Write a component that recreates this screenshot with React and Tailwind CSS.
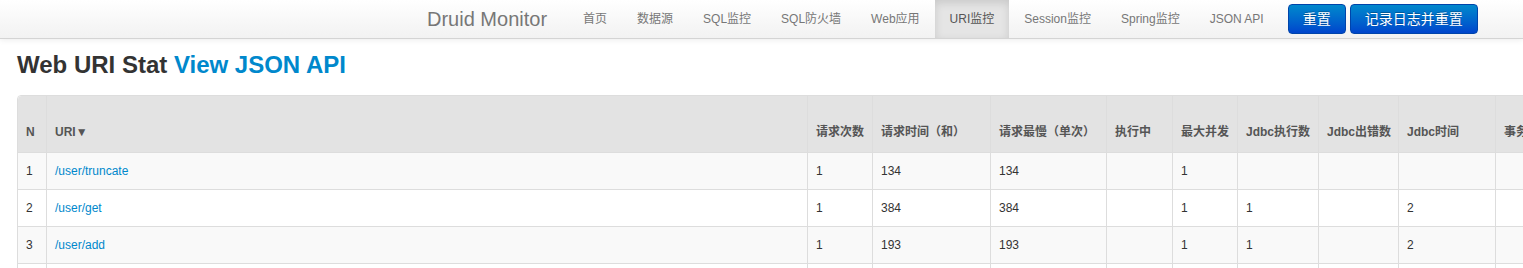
import React from "react";

const navItems = ["首页", "数据源", "SQL监控", "SQL防火墙", "Web应用", "URI监控", "Session监控", "Spring监控", "JSON API"];

const cols = [
  { label: "N", w: 28 },
  { label: "URI▼", w: 761 },
  { label: "请求次数", w: 65 },
  { label: "请求时间（和）", w: 118 },
  { label: "请求最慢（单次）", w: 116 },
  { label: "执行中", w: 66 },
  { label: "最大并发", w: 65 },
  { label: "Jdbc执行数", w: 81 },
  { label: "Jdbc出错数", w: 80 },
  { label: "Jdbc时间", w: 97 },
  { label: "事务提交数", w: 90 },
  { label: "事务回滚数", w: 90 },
  { label: "读取行数", w: 80 },
];

const rows = [
  ["1", "/user/truncate", "1", "134", "134", "", "1", "", "", "", "", "", ""],
  ["2", "/user/get", "1", "384", "384", "", "1", "1", "", "2", "", "", ""],
  ["3", "/user/add", "1", "193", "193", "", "1", "1", "", "2", "", "", ""],
  ["4", "/user/list", "1", "52", "52", "", "1", "1", "", "1", "", "", ""],
];

const tableWidth = cols.reduce((s, c) => s + c.w, 0) + 2;

export default function App() {
  return (
    <div
      className="w-full h-[268px] overflow-hidden bg-white text-[#333]"
      style={{ fontFamily: '"Liberation Sans", Arial, "Noto Sans CJK SC", sans-serif' }}
    >
      <div className="relative z-10 h-[39px] border-b border-[#d4d4d4] bg-gradient-to-b from-white to-[#f2f2f2] shadow-[0_1px_6px_rgba(0,0,0,0.08)]">
        <div className="flex items-center h-[38px] pl-[407px]">
          <span className="px-[20px] text-[20px] leading-[20px] text-[#777]">Druid Monitor</span>
          <ul className="flex h-[38px] ml-[1px]">
            {navItems.map((t) => (
              <li
                key={t}
                className={
                  "flex items-center px-[15px] h-[38px] text-[12px] " +
                  (t === "URI监控"
                    ? "bg-[#e5e5e5] text-[#555] shadow-[inset_0_3px_8px_rgba(0,0,0,0.125)]"
                    : "text-[#777]")
                }
              >
                {t}
              </li>
            ))}
          </ul>
          <div className="flex gap-[4px] ml-[9px]">
            <button className="h-[30px] px-[14px] rounded-[4px] border border-[#0044aa] bg-gradient-to-b from-[#0088cc] to-[#0044cc] text-white text-[14px] leading-[20px] [text-shadow:0_-1px_0_rgba(0,0,0,0.25)]">
              重置
            </button>
            <button className="h-[30px] px-[14px] rounded-[4px] border border-[#0044aa] bg-gradient-to-b from-[#0088cc] to-[#0044cc] text-white text-[14px] leading-[20px] [text-shadow:0_-1px_0_rgba(0,0,0,0.25)]">
              记录日志并重置
            </button>
          </div>
        </div>
      </div>

      <div className="px-[17px]">
        <h3 className="mt-[6px] mb-[10px] text-[24px] leading-[40px] font-bold text-[#333] whitespace-nowrap">
          Web URI Stat <span className="text-[#0088cc]">View JSON API</span>
        </h3>

        <table
          className="table-fixed border-separate border-spacing-0 border border-[#ddd] rounded-[4px] text-[12px] leading-[20px]"
          style={{ width: tableWidth }}
        >
          <colgroup>
            {cols.map((c, i) => (
              <col key={i} style={{ width: c.w }} />
            ))}
          </colgroup>
          <thead>
            <tr>
              {cols.map((c, i) => (
                <th
                  key={i}
                  className={
                    "h-[56px] align-bottom text-left font-bold text-[#555] bg-[#e3e3e3] px-[8px] pb-[10px] whitespace-nowrap overflow-hidden " +
                    (i === 0 ? "rounded-tl-[4px]" : "border-l border-[#ddd]")
                  }
                >
                  {c.label}
                </th>
              ))}
            </tr>
          </thead>
          <tbody>
            {rows.map((r, ri) => (
              <tr key={ri} className={ri % 2 === 0 ? "bg-[#f9f9f9]" : "bg-white"}>
                {r.map((v, ci) => (
                  <td
                    key={ci}
                    className={
                      "h-[37px] border-t border-[#ddd] px-[8px] py-[8px] align-middle whitespace-nowrap overflow-hidden " +
                      (ci === 0 ? "" : "border-l ") +
                      (ci === 1 ? "text-[#0088cc]" : "text-[#333]")
                    }
                  >
                    {v}
                  </td>
                ))}
              </tr>
            ))}
          </tbody>
        </table>
      </div>
    </div>
  );
}
